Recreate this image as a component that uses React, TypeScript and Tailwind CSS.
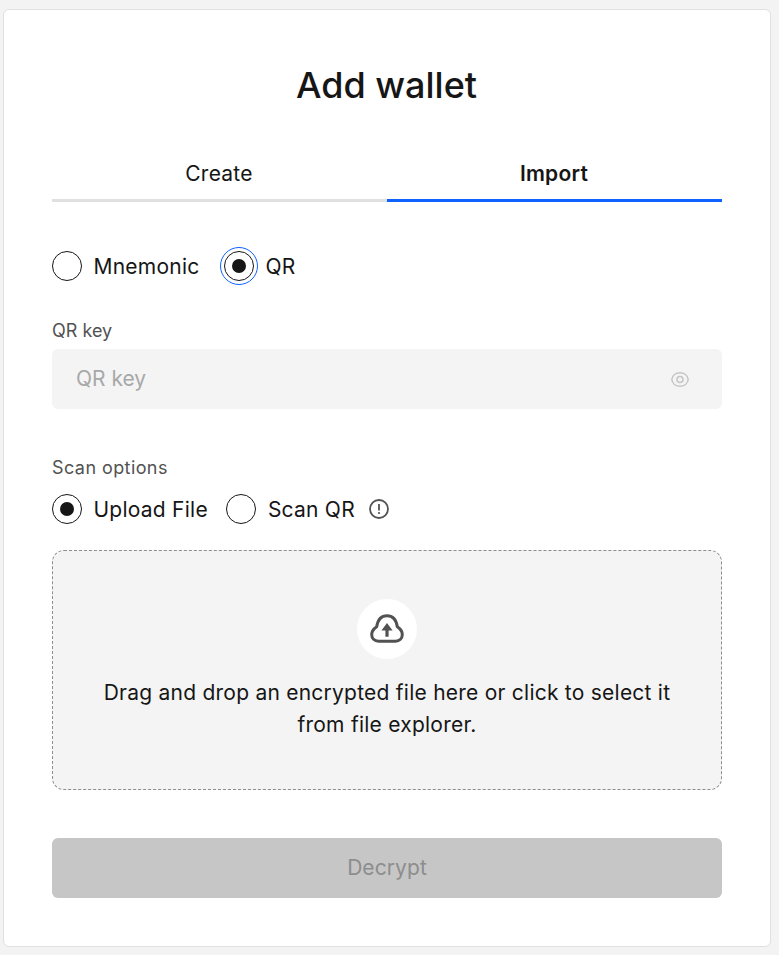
import type { ReactNode } from "react";

function Radio({ checked = false, focused = false }: { checked?: boolean; focused?: boolean }) {
  return (
    <span
      className={`flex size-[30px] shrink-0 items-center justify-center rounded-full border border-[#161616] bg-white ${
        focused ? "outline outline-1 outline-offset-[3px] outline-[#0f62fe]" : ""
      }`}
    >
      {checked && <span className="size-[14px] rounded-full bg-[#161616]" />}
    </span>
  );
}

function Option({ children, className = "", ...state }: { children: ReactNode; className?: string; checked?: boolean; focused?: boolean }) {
  return (
    <label className={`flex items-center gap-[11.5px] ${className}`}>
      <Radio {...state} />
      <span className="pt-[2px] whitespace-nowrap">{children}</span>
    </label>
  );
}

function EyeIcon() {
  return (
    <svg className="size-5" viewBox="0 0 20 20" fill="none" stroke="#c6c6c6" strokeWidth="1.6">
      <path d="M1.8 10.5C2.3 6.5 5.7 3.8 10 3.8S17.7 6.5 18.2 10.5C17.7 14.5 14.3 17.2 10 17.2S2.3 14.5 1.8 10.5Z" strokeLinejoin="round" />
      <circle cx="10" cy="10.5" r="3" />
    </svg>
  );
}

function InfoIcon() {
  return (
    <svg className="size-5" viewBox="0 0 20 20" fill="none">
      <circle cx="10" cy="10" r="9" stroke="#525252" strokeWidth="1.8" />
      <path d="M10 5v6.4" stroke="#525252" strokeWidth="1.8" />
      <circle cx="10" cy="14" r="1.1" fill="#525252" />
    </svg>
  );
}

function UploadIcon() {
  return (
    <svg className="h-[30px] w-[34px]" viewBox="0 0 34 30" fill="none">
      <path
        d="M8.5 27.2H25.5C29.6 27.2 32.3 24.2 32.3 20.6C32.3 17.6 30.5 15 27.3 12.8C26.3 6 22.6 1.7 17 1.7S7.7 6 6.7 12.8C3.5 15 1.7 17.6 1.7 20.6C1.7 24.2 4.4 27.2 8.5 27.2Z"
        stroke="#525252"
        strokeWidth="3"
        strokeLinejoin="round"
      />
      <path d="M17 9L22.6 16.5H18.6V22.7H15.4V16.5H11.4Z" fill="#525252" />
    </svg>
  );
}

export default function App() {
  return (
    <div className="h-[955px] w-[779px] bg-[#f3f3f3] pt-[9px] pl-[3px] font-['Inter',sans-serif] text-[21px] leading-8 tracking-[0.24px] text-[#161616]">
      <main className="flex h-[938px] w-[768px] flex-col rounded-md border border-[#e0e0e0] bg-white px-12">
        <h1 className="mt-[51px] pr-px text-center text-[36px] leading-12 tracking-normal font-medium">Add wallet</h1>

        <div className="mt-[39px] grid h-[54px] grid-cols-2 text-center leading-[51px]">
          <button className="border-b-3 border-[#e0e0e0] pr-px">Create</button>
          <button className="border-b-3 border-[#0f62fe] pr-px font-semibold">Import</button>
        </div>

        <div className="mt-12 flex h-8 items-center">
          <Option>Mnemonic</Option>
          <Option className="ml-[24.5px]" checked focused>QR</Option>
        </div>

        <div className="mt-[37px] h-6 text-lg leading-6 tracking-normal text-[#525252]">QR key</div>
        <div className="mt-[6px] flex h-[60px] items-center justify-between rounded-md bg-[#f4f4f4] pr-8 pl-6">
          <span className="tracking-normal text-[#a8a8a8]">QR key</span>
          <EyeIcon />
        </div>

        <div className="mt-[47px] h-6 text-lg leading-6 tracking-[0.42px] text-[#525252]">Scan options</div>
        <div className="mt-[13px] flex h-8 items-center">
          <Option checked>Upload File</Option>
          <Option className="ml-[18.5px]">Scan QR</Option>
          <span className="ml-[14.5px]"><InfoIcon /></span>
        </div>

        <div className="mt-[25px] flex h-[240px] flex-col items-center rounded-xl border border-dashed border-[#8d8d8d] bg-[#f4f4f4] pt-12">
          <div className="flex size-[60px] items-center justify-center rounded-full bg-white">
            <UploadIcon />
          </div>
          <p className="mt-[18px] w-[572px] text-center">Drag and drop an encrypted file here or click to select it from file explorer.</p>
        </div>

        <button className="mt-12 h-[60px] rounded-md bg-[#c6c6c6] tracking-[0.08px] text-[#8d8d8d]">Decrypt</button>
      </main>
    </div>
  );
}
